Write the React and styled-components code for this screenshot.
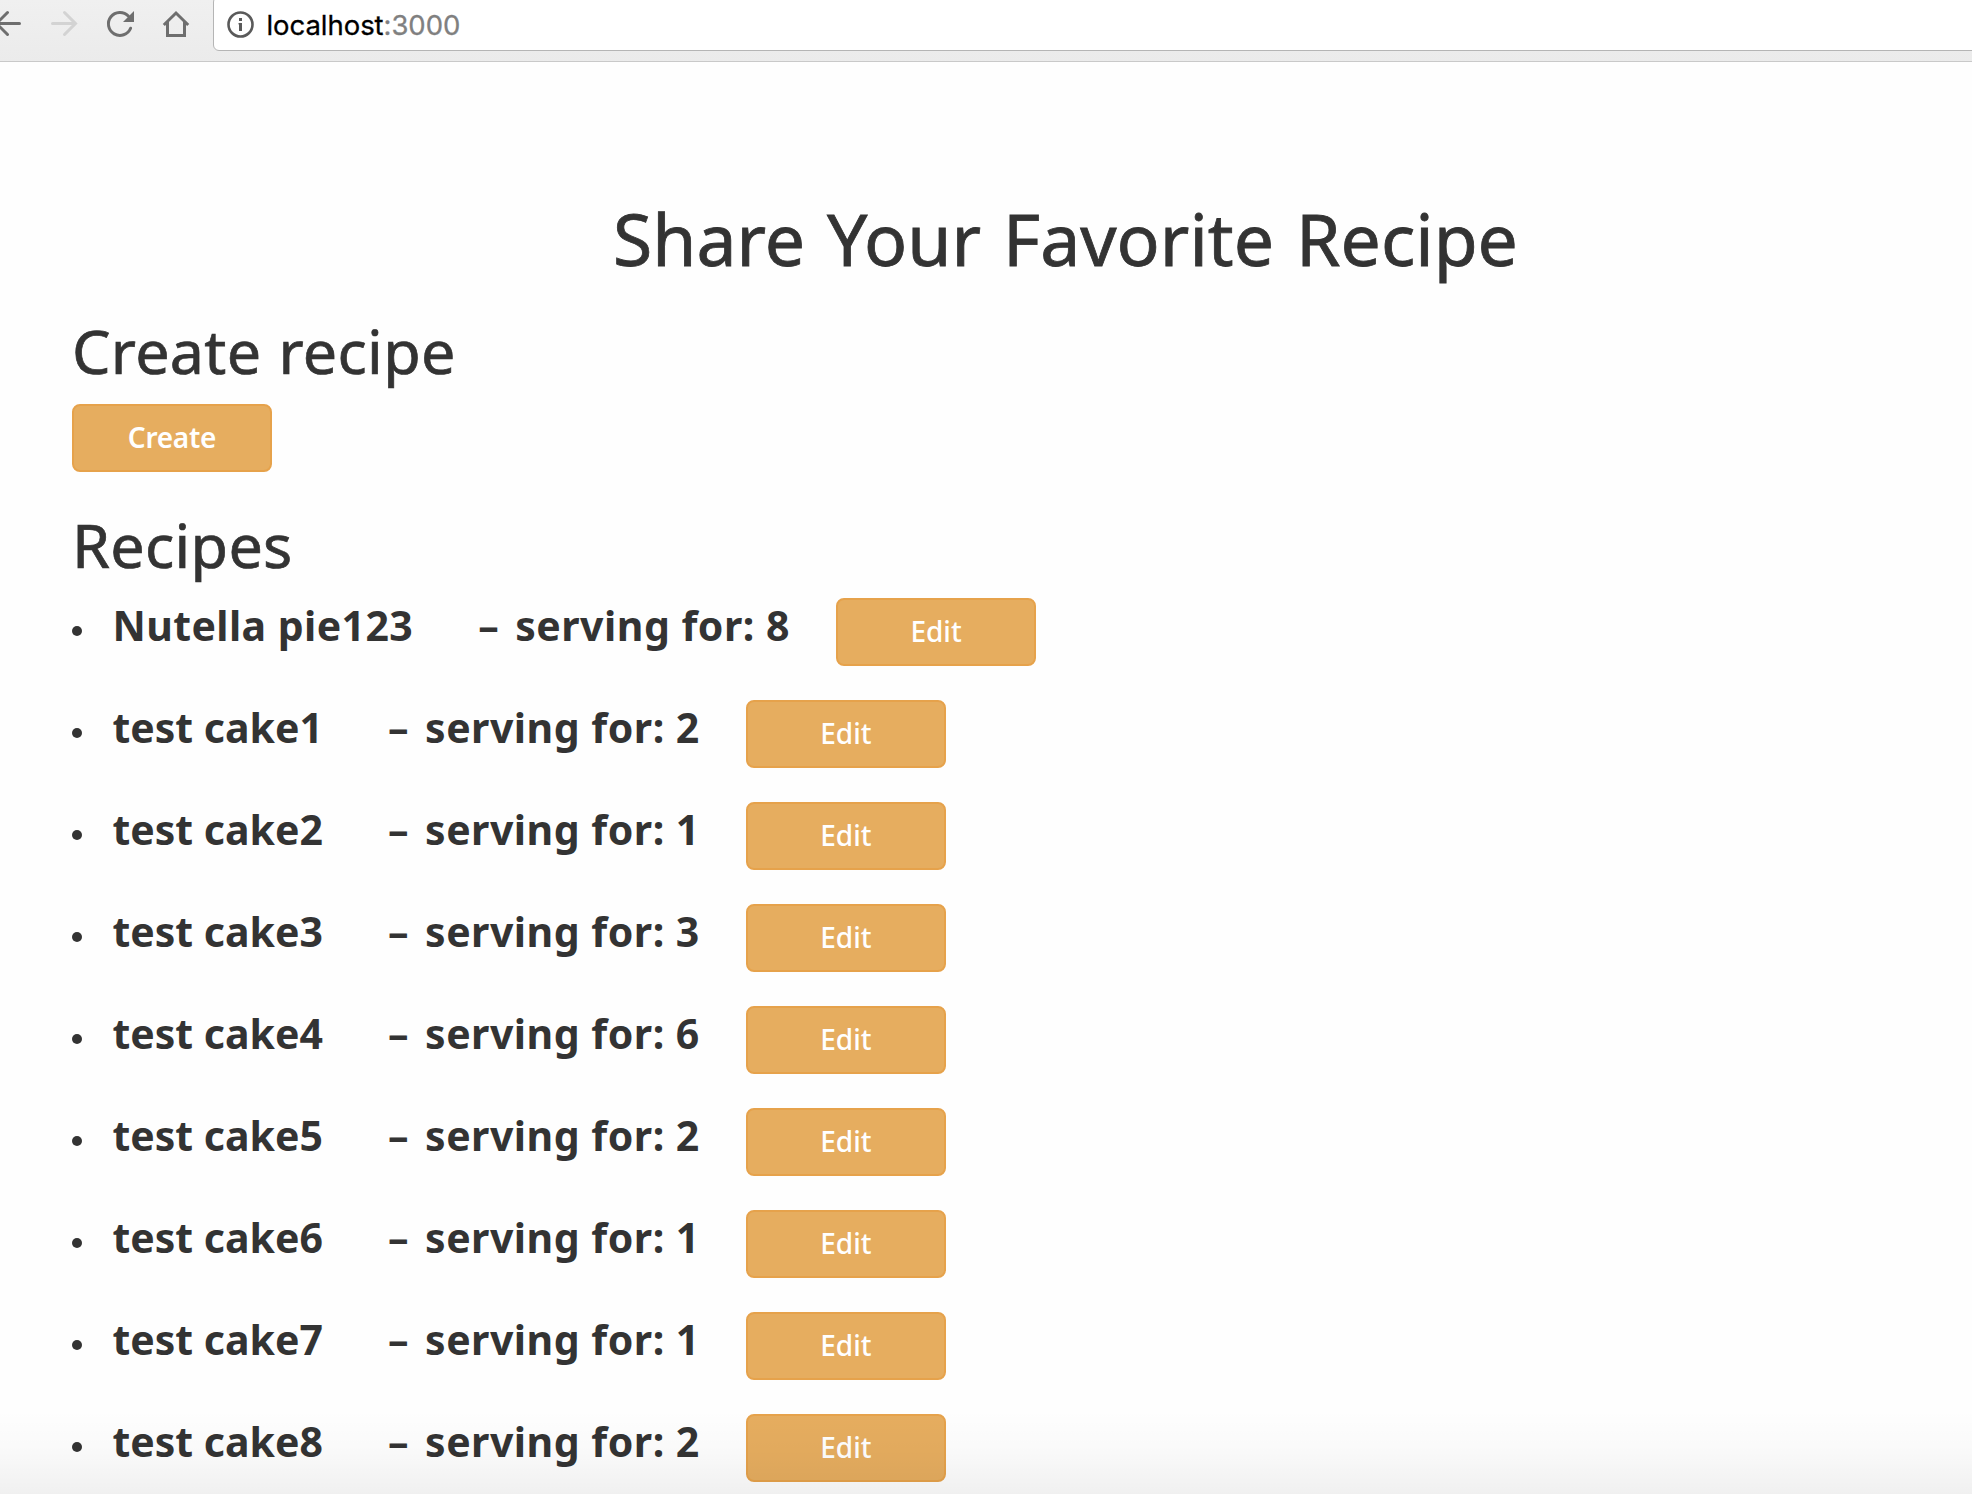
import React from "react";
import styled, { createGlobalStyle } from "styled-components";

const GlobalStyle = createGlobalStyle`
  *, *::before, *::after { box-sizing: border-box; }
  body {
    margin: 0;
    background: #fefefe;
    color: #333;
    font-family: "Noto Sans", "Open Sans", sans-serif;
    overflow: hidden;
  }
`;

const Screen = styled.div`
  position: relative;
  height: 1494px;
  overflow: hidden;
`;

const Toolbar = styled.header`
  display: flex;
  align-items: flex-start;
  height: 62px;
  background: linear-gradient(#f0f0f0, #ebebeb);
  border-bottom: 1px solid #c9c9c9;
`;

const NavIcons = styled.svg`
  flex: none;
  width: 213px;
  height: 48px;
`;

const AddressBar = styled.div`
  flex: 1;
  display: flex;
  align-items: center;
  gap: 12.5px;
  height: 55px;
  margin: -4px -8px 0 0;
  padding: 4px 0 0 13px;
  background: #fff;
  border: 1px solid #b5b5b5;
  border-radius: 6px;
`;

const InfoIcon = styled.svg`
  flex: none;
  width: 27px;
  height: 27px;
  margin-top: -2px;
`;

const Address = styled.span`
  font-family: Inter, Roboto, sans-serif;
  font-size: 27.5px;
  line-height: 34px;
  margin-top: -1px;
  color: #000;
  letter-spacing: -0.05px;
  -webkit-text-stroke: 0.3px currentColor;
`;

const Port = styled.span`
  color: #808080;
`;

const Content = styled.main`
  padding: 141px 0 0 72px;
`;

const Title = styled.h1`
  width: 1987px;
  margin: 0 0 46px;
  font-size: 71.5px;
  font-weight: 400;
  line-height: 72px;
  text-align: center;
  word-spacing: 3.5px;
  -webkit-text-stroke: 0.8px currentColor;
`;

const SectionTitle = styled.h2`
  margin: 0 0 23px;
  font-size: 61px;
  font-weight: 400;
  line-height: 60px;
  letter-spacing: 0.3px;
  word-spacing: 1px;
  -webkit-text-stroke: 0.7px currentColor;
`;

const Button = styled.button`
  flex: none;
  display: flex;
  align-items: center;
  justify-content: center;
  width: 200px;
  height: 68px;
  padding: 0 0 2px;
  border: 2px solid #e6a24b;
  border-radius: 8px;
  background: #e6ad5f;
  color: #fff;
  font: ${(p) => (p.$strong ? 600 : 500)} 28px/36px "Noto Sans", "Open Sans", sans-serif;
  letter-spacing: ${(p) => (p.$strong ? -0.25 : 0)}px;
`;

const CreateSection = styled.section`
  margin-bottom: 43px;
`;

const RecipeList = styled.ul`
  display: flex;
  flex-direction: column;
  gap: 34px;
  margin: 0;
  padding: 0;
  list-style: none;
`;

const RecipeRow = styled.li`
  display: flex;
  align-items: flex-start;
  height: 68px;
  font-size: 41px;
  font-weight: 700;
  line-height: 54px;
  white-space: nowrap;

  &::before {
    content: "";
    flex: none;
    width: 10px;
    height: 10px;
    margin: 28px 30.4px 0 0;
    border-radius: 50%;
    background: #333;
  }
`;

const Name = styled.span`
  margin-right: 65px;
  letter-spacing: ${(p) => p.$tracking}px;
`;

const Dash = styled.span`
  margin-right: 16.5px;
`;

const Serving = styled.span`
  margin-right: 46.1px;
  letter-spacing: 0.5px;
`;

const BottomShade = styled.div`
  position: absolute;
  left: 0;
  right: 0;
  bottom: 0;
  height: 84px;
  background: linear-gradient(rgba(0, 0, 0, 0), rgba(0, 0, 0, 0.02) 50%, rgba(0, 0, 0, 0.055));
  pointer-events: none;
`;

const recipes = [
  { name: "Nutella pie123", servings: 8, tracking: 0.42 },
  { name: "test cake1", servings: 2 },
  { name: "test cake2", servings: 1 },
  { name: "test cake3", servings: 3 },
  { name: "test cake4", servings: 6 },
  { name: "test cake5", servings: 2 },
  { name: "test cake6", servings: 1 },
  { name: "test cake7", servings: 1 },
  { name: "test cake8", servings: 2 },
];

export default function App() {
  return (
    <Screen>
      <GlobalStyle />
      <Toolbar>
        <NavIcons viewBox="0 0 213 48" fill="none" stroke="#6e6e6e" strokeWidth="3" strokeLinecap="round">
          <path d="M19.500 23.500H-4M7.500 12.500L-3.500 23.500L7.500 34.500" />
          <path stroke="#d3d3d3" d="M52.500 23.500H75M64.500 12.500L75.500 23.500L64.500 34.500" />
          <path d="M130.600 28.200A11.500 11.500 0 1 1 128.300 16" />
          <path fill="#6e6e6e" stroke="none" d="M134 11V22H123Z" />
          <path strokeLinecap="butt" d="M163.800 25L176 13L188.200 25M167.500 22V35.500H184.500V22" />
        </NavIcons>
        <AddressBar>
          <InfoIcon viewBox="0 0 27 27" fill="none" stroke="#5a5a5a" strokeWidth="2.600">
            <circle cx="13.500" cy="13.500" r="12" />
            <path strokeWidth="3" d="M13.500 7V10M13.500 12V20" />
            <path strokeWidth="1.500" d="M11.500 12.700H14" />
          </InfoIcon>
          <Address>localhost<Port>:3000</Port></Address>
        </AddressBar>
      </Toolbar>
      <Content>
        <Title>Share Your Favorite Recipe</Title>
        <CreateSection>
          <SectionTitle>Create recipe</SectionTitle>
          <Button $strong>Create</Button>
        </CreateSection>
        <SectionTitle>Recipes</SectionTitle>
        <RecipeList>
          {recipes.map(({ name, servings, tracking = 0.03 }) => (
            <RecipeRow key={name}>
              <Name $tracking={tracking}>{name}</Name>
              <Dash>–</Dash>
              <Serving>serving for: {servings}</Serving>
              <Button>Edit</Button>
            </RecipeRow>
          ))}
        </RecipeList>
      </Content>
      <BottomShade />
    </Screen>
  );
}
